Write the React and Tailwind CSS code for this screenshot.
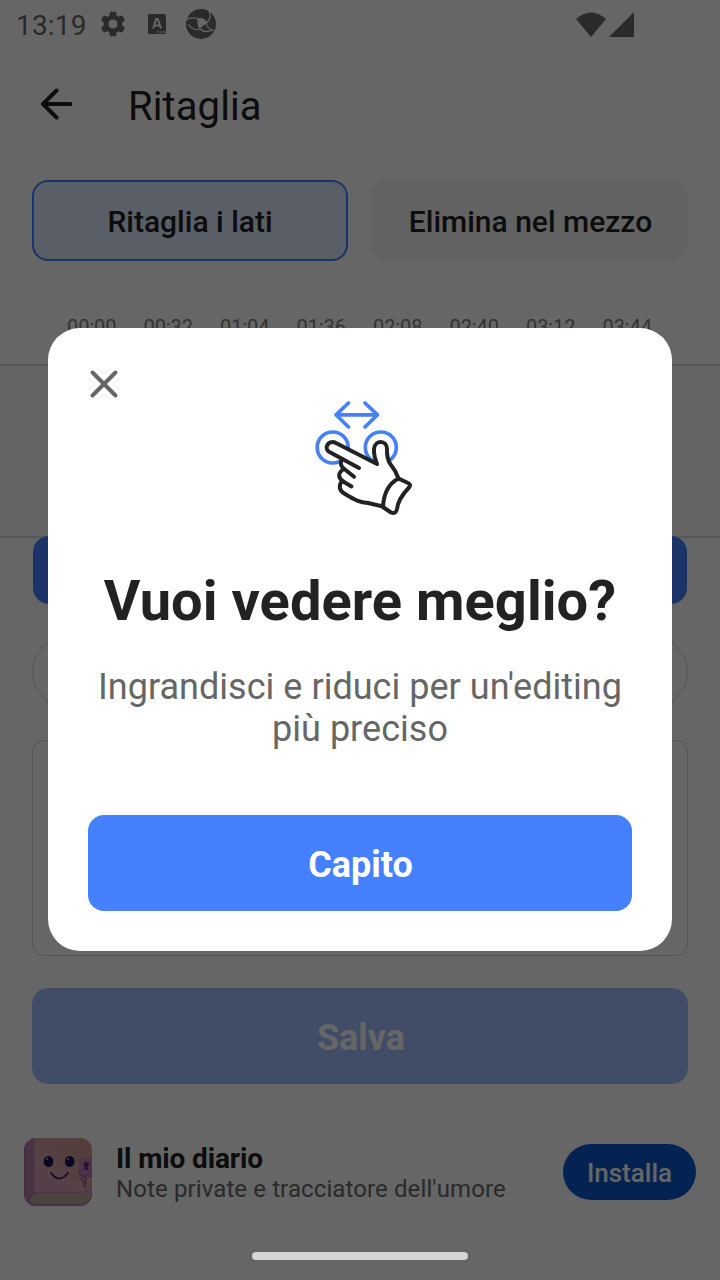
const times = ["00:00", "00:32", "01:04", "01:36", "02:08", "02:40", "03:12", "03:44"];

function StatusBar() {
  return (
    <div className="flex h-12 items-center pl-4 text-[28px] text-[#696969]">
      <span className="w-[83px] pt-[3px] leading-none tracking-[0.2px] whitespace-nowrap">13:19</span>
      <svg className="h-7 w-7" viewBox="1 1 22 22" fill="currentColor">
        <path d="M19.14 12.94c.04-.3.06-.61.06-.94 0-.32-.02-.64-.07-.94l2.03-1.58a.49.49 0 0 0 .12-.61l-1.92-3.32a.49.49 0 0 0-.59-.22l-2.39.96c-.5-.38-1.03-.7-1.62-.94l-.36-2.54a.48.48 0 0 0-.48-.41h-3.84c-.24 0-.43.17-.47.41l-.36 2.54c-.59.24-1.13.57-1.62.94l-2.39-.96a.48.48 0 0 0-.59.22L2.74 8.87c-.12.21-.08.47.12.61l2.03 1.58c-.05.3-.09.63-.09.94s.02.64.07.94l-2.03 1.58a.49.49 0 0 0-.12.61l1.92 3.32c.12.22.37.29.59.22l2.39-.96c.5.38 1.03.7 1.62.94l.36 2.54c.05.24.24.41.48.41h3.84c.24 0 .44-.17.47-.41l.36-2.54c.59-.24 1.13-.56 1.62-.94l2.39.96c.22.08.47 0 .59-.22l1.92-3.32a.47.47 0 0 0-.12-.61l-2.01-1.58zM12 15.6A3.6 3.6 0 1 1 12 8.4a3.6 3.6 0 0 1 0 7.2z" />
      </svg>
      <svg className="ml-[21px] h-5 w-[18px]" viewBox="0 0 18 20">
        <rect width="18" height="20" rx="1.5" fill="currentColor" />
        <path d="M5 14.5 8.2 5h1.6l3.2 9.5M6.3 11.5h5.4" fill="none" stroke="#fff" strokeWidth="1.9" />
        <path d="M9.5 18h1.6M12.5 18h1.6M15.3 18h1.6" stroke="#fff" strokeWidth="1.4" />
      </svg>
      <svg className="ml-5 h-[30px] w-[30px]" viewBox="0 0 30 30">
        <circle cx="15" cy="15" r="15" fill="currentColor" />
        <path d="M11.500 9.500Q18 7.500 21.500 14Q17 16 13.500 20.500Q10.500 15.500 11.500 9.500Z" fill="#fff" />
        <path d="M0 11Q5 7.500 12 10M21 13.500Q26 9 23 2M20.500 14.500Q21 20 28.500 22M14 20Q19 24.500 26 21M13.500 20.500Q7 22 2 15" fill="none" stroke="#fff" strokeWidth="1.200" />
      </svg>
      <svg className="mt-[2px] ml-[360px] h-[26px] w-[60px]" viewBox="0 0 60 26" fill="currentColor">
        <path d="M0 7Q15-6 30 7L15 25Z" />
        <path d="M33 25 58 0V25Z" />
      </svg>
    </div>
  );
}

function DiaryIcon() {
  return (
    <svg className="h-[68px] w-[68px]" viewBox="0 0 68 68">
      <defs>
        <linearGradient id="cover" x1="0.2" y1="1" x2="0.8" y2="0">
          <stop offset="0" stopColor="#d09bc4" />
          <stop offset="0.5" stopColor="#d5a3af" />
          <stop offset="1" stopColor="#d09c93" />
        </linearGradient>
        <linearGradient id="spine">
          <stop offset="0" stopColor="#a37a9f" />
          <stop offset="0.4" stopColor="#b885b0" />
          <stop offset="0.8" stopColor="#ac7fa2" />
          <stop offset="1" stopColor="#c997ac" />
        </linearGradient>
        <clipPath id="book"><rect width="68" height="68" rx="12" /></clipPath>
      </defs>
      <g clipPath="url(#book)">
        <rect width="68" height="68" fill="url(#cover)" />
        <rect width="11" height="68" fill="url(#spine)" />
        <path d="M4 62Q4 54 14 54H54Q64 54 68 48V68H6Z" fill="#b07dac" />
        <path d="M7 62Q7 56 14 56H58Q64 55 67 52Q67 66 56 66H12Q7 66 7 62Z" fill="#bcaa9c" />
        <path d="M12 55.500H56Q64 55.500 68 50" stroke="#cf9bbd" strokeWidth="1.5" fill="none" />
        <rect x="55" y="20" width="16" height="17" rx="4" fill="#c47dbf" />
        <path d="M55 33Q55 38 60 38H68" stroke="#a066a4" strokeWidth="1.5" fill="none" />
        <circle cx="62.3" cy="26.5" r="2.5" fill="#68265f" />
        <path d="M61.3 27h2l1 5h-4z" fill="#68265f" />
        <path d="M60 43v6M60 45.5h3M60 48.5h3" stroke="#a05c92" strokeWidth="1.5" />
        <circle cx="60" cy="41" r="2.2" stroke="#a05c92" strokeWidth="1.3" fill="none" />
        <ellipse cx="24.5" cy="23.5" rx="4.8" ry="5.5" fill="#1a104f" />
        <ellipse cx="45.7" cy="23.5" rx="4.8" ry="5.5" fill="#1a104f" />
        <circle cx="23" cy="21" r="1.1" fill="#a99fc0" />
        <circle cx="44" cy="21" r="1.1" fill="#a99fc0" />
        <path d="M27 35Q35 46 44 35" stroke="#2a1a50" strokeWidth="1.7" fill="none" strokeLinecap="round" />
      </g>
    </svg>
  );
}

function PinchIcon() {
  return (
    <svg className="h-[130px] w-[130px]" viewBox="0 0 130 130" fill="none" strokeLinecap="round" strokeLinejoin="round">
      <g stroke="#4580ff" strokeWidth="3.7">
        <path d="M36 24.8H77.5M48.5 13 36 24.8 48.5 37M65 13 77.5 24.8 65 37" />
        <circle cx="32.7" cy="57.5" r="15.5" />
        <circle cx="80.8" cy="57.5" r="15.5" />
      </g>
      <path d="M77 74 36 53.5C29 50 24 58 30 62L42 68.5C39 73 40 76 43.5 79C38 82 38.5 88 42 91C37 95 40 101 44 103L56 109Q61 112 68 113L84 116.5 99 89C95 81 90 77 88 69V60C88 49 74 49 74 60Q74 66 77 74Z" fill="#fff" />
      <g stroke="#222" strokeWidth="4">
        <path d="M59 78 29.5 62C23.5 58.5 28 50 35 52.5L77 74Q73.5 65 74 59C75 49.5 87 50 87 59Q86.5 69 91 75Q96 81 98.5 88.5" />
        <path d="M42 69C39.5 73 41 77 45 79.5L54 86.7M43 79.5C37 84 38.5 88.5 44 92L51.5 96.5M42 91C38 96 39.5 101 45 104C55 110 60 112.5 68 113L83 116.5" />
        <path d="M98.5 88.5 108 93Q111.500 94.500 109 97.500Q98 109 97 119Q96 124.500 91 122.500L83 117Q84 96 98.500 88.500Z" />
      </g>
    </svg>
  );
}

function Editor() {
  return (
    <div className="flex h-full flex-col">
      <StatusBar />
      <header className="flex h-[132px] shrink-0 items-start pt-8 pl-10">
        <svg className="mt-2 h-8 w-8" viewBox="0 0 32 32" fill="none" stroke="#222" strokeWidth="4" strokeLinecap="round" strokeLinejoin="round">
          <path d="M30.500 16H3.500M16.500 2.500 3 16 16.500 29.500" />
        </svg>
        <h1 className="mt-px ml-14 text-[40px] leading-[52px] tracking-[0.1px] text-[#222]">Ritaglia</h1>
      </header>
      <div className="grid h-[81px] shrink-0 grid-cols-2 gap-6 px-8 text-[30px] font-medium text-[#222]">
        <button className="rounded-2xl border-2 border-[#4580ff] bg-[#e1ebff] pt-[2px]">Ritaglia i lati</button>
        <button className="rounded-2xl bg-[#f5f5f5] pt-[2px] pl-px">Elimina nel mezzo</button>
      </div>
      <div className="mt-[54px] flex h-[49px] shrink-0 gap-[27.500px] pl-[67px] text-xl leading-6 text-[#808080]">
        {times.map((t) => <span key={t} className="w-[49px] tracking-[-0.1px]">{t}</span>)}
      </div>
      <div className="h-[174px] shrink-0 border-y-2 border-[#dcdcdc] bg-[#fafafa]" />
      <div className="relative mx-[33px] -mt-[2px] h-[68px] shrink-0 rounded-2xl bg-[#4580ff]" />
      <div className="mx-8 mt-8 h-[72px] shrink-0 rounded-full border border-[#d4d4d4]" />
      <div className="mx-8 mt-8 h-[216px] shrink-0 rounded-xl border border-[#d4d4d4]" />
      <button className="mx-8 mt-8 h-24 shrink-0 rounded-2xl bg-[#a2bfff] pt-1 pl-[2px] text-4xl font-bold text-white">Salva</button>
      <div className="mt-[54px] flex items-center pr-6 pl-6">
        <DiaryIcon />
        <div className="ml-6 flex-1 pt-[2px] whitespace-nowrap">
          <div className="text-[28px] leading-[32px] font-bold tracking-[-0.13px] text-[#222]">Il mio diario</div>
          <div className="text-2xl leading-[28px] tracking-[0.11px] text-[#696969]">Note private e tracciatore dell'umore</div>
        </div>
        <button className="h-14 w-[133px] rounded-full bg-[#0b57d0] pt-[2px] text-[26px] font-medium text-white">Installa</button>
      </div>
    </div>
  );
}

export default function App() {
  return (
    <div className="relative h-[1280px] w-[720px] overflow-hidden bg-white font-['Roboto',sans-serif]">
      <Editor />
      <div className="absolute inset-0 flex flex-col bg-black/60 px-12 pt-[328px]">
        <div className="flex h-[623px] shrink-0 flex-col rounded-[32px] bg-white px-10 pb-10">
          <div className="flex h-[192px] pt-10">
            <svg className="h-8 w-8" viewBox="0 0 32 32" fill="none" stroke="#666" strokeWidth="4" strokeLinecap="round">
              <path d="M4.500 4.500 27.500 27.500M27.500 4.500 4.500 27.500" />
            </svg>
            <div className="ml-[180px] pt-[22px]"><PinchIcon /></div>
          </div>
          <h2 className="mt-12 text-center text-[56px] leading-[66px] font-bold tracking-[0.04px] whitespace-nowrap text-[#222]">Vuoi vedere meglio?</h2>
          <p className="mt-8 text-center text-4xl leading-[42px] tracking-[0.03px] text-[#666]">Ingrandisci e riduci per un'editing<br />più preciso</p>
          <button className="mt-auto h-24 rounded-2xl bg-[#4580ff] pt-1 pl-px text-4xl font-bold text-white">Capito</button>
        </div>
        <div className="mt-[301px] h-2 w-[216px] self-center rounded-full bg-[#d6d6d6]" />
      </div>
    </div>
  );
}
